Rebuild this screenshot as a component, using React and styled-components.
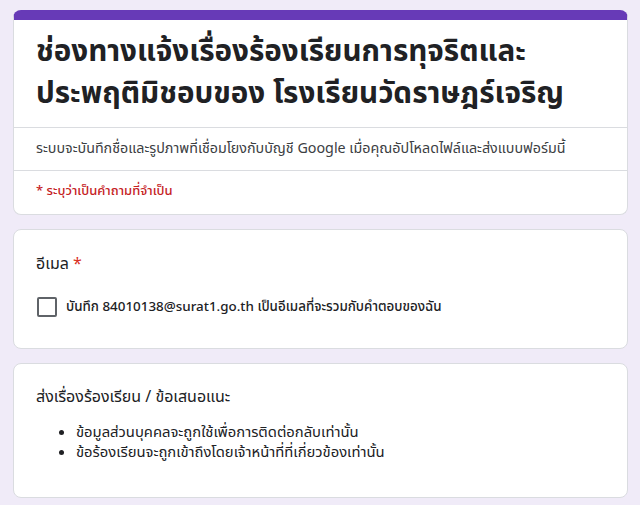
import React from "react";
import styled, { createGlobalStyle } from "styled-components";

const GlobalStyle = createGlobalStyle`
  html, body {
    margin: 0;
    padding: 0;
    background: #f0ebf8;
  }
  body {
    font-family: "Noto Sans Thai", "Noto Sans", "Liberation Sans", "DejaVu Sans", sans-serif;
    color: #202124;
  }
`;

const Page = styled.div`
  display: flex;
  flex-direction: column;
  gap: 14px;
  padding: 10px 12px 8px 13px;
  width: 640px;
  height: 505px;
  box-sizing: border-box;
  overflow: hidden;
`;

const Card = styled.div`
  background: #ffffff;
  border: 1px solid #dadce0;
  border-radius: 8px;
  box-sizing: border-box;
  overflow: hidden;
  height: ${(p) => p.h}px;
  flex-shrink: 0;
`;

const HeaderCard = styled(Card)`
  border-top: 10px solid #673ab7;
`;

const TitleBlock = styled.div`
  padding: 11px 22px 12px 22px;
  border-bottom: 1px solid #dadce0;
`;

const Title = styled.h1`
  margin: 0;
  font-size: 29.6px;
  font-weight: 700;
  line-height: 42px;
  color: #202124;
`;

const Section = styled.div`
  padding: ${(p) => p.pad};
  border-bottom: ${(p) => (p.divider ? "1px solid #dadce0" : "none")};
  font-size: ${(p) => p.size || 13}px;
  font-weight: ${(p) => p.weight || 400};
  line-height: 20px;
  color: ${(p) => p.color || "#202124"};
`;

const QuestionBody = styled.div`
  padding: ${(p) => p.pad || "22px 22px"};
`;

const Label = styled.div`
  font-size: 16px;
  line-height: 24px;
  color: #202124;
`;

const Star = styled.span`
  color: #d93025;
`;

const CheckRow = styled.label`
  display: flex;
  align-items: center;
  gap: 9px;
  margin-top: 21px;
  font-size: 13.4px;
  font-weight: 500;
  color: #202124;
`;

const Box = styled.span`
  width: 16px;
  height: 16px;
  border: 2px solid #5f6368;
  border-radius: 2px;
  margin-left: 1px;
  flex-shrink: 0;
`;

const List = styled.ul`
  margin: 14px 0 0;
  padding-left: 40px;
  font-size: 14.8px;
  line-height: 20px;
  color: #202124;
`;

export default function App() {
  return (
    <>
      <GlobalStyle />
      <Page>
        <HeaderCard h={205}>
          <TitleBlock>
            <Title>
              ช่องทางแจ้งเรื่องร้องเรียนการทุจริตและ
              <br />
              ประพฤติมิชอบของ โรงเรียนวัดราษฎร์เจริญ
            </Title>
          </TitleBlock>
          <Section pad="11px 22px" size={14.3} divider color="#3c4043">
            ระบบจะบันทึกชื่อและรูปภาพที่เชื่อมโยงกับบัญชี Google เมื่อคุณอัปโหลดไฟล์และส่งแบบฟอร์มนี้
          </Section>
          <Section pad="10px 22px" weight={500} color="#c5221f">
            * ระบุว่าเป็นคำถามที่จำเป็น
          </Section>
        </HeaderCard>
        <Card h={120}>
          <QuestionBody>
            <Label>
              อีเมล <Star>*</Star>
            </Label>
            <CheckRow>
              <Box />
              บันทึก 84010138@surat1.go.th เป็นอีเมลที่จะรวมกับคำตอบของฉัน
            </CheckRow>
          </QuestionBody>
        </Card>
        <Card h={135}>
          <QuestionBody pad="21px 22px">
            <Label>ส่งเรื่องร้องเรียน / ข้อเสนอแนะ</Label>
            <List>
              <li>ข้อมูลส่วนบุคคลจะถูกใช้เพื่อการติดต่อกลับเท่านั้น</li>
              <li>ข้อร้องเรียนจะถูกเข้าถึงโดยเจ้าหน้าที่ที่เกี่ยวข้องเท่านั้น</li>
            </List>
          </QuestionBody>
        </Card>
      </Page>
    </>
  );
}
